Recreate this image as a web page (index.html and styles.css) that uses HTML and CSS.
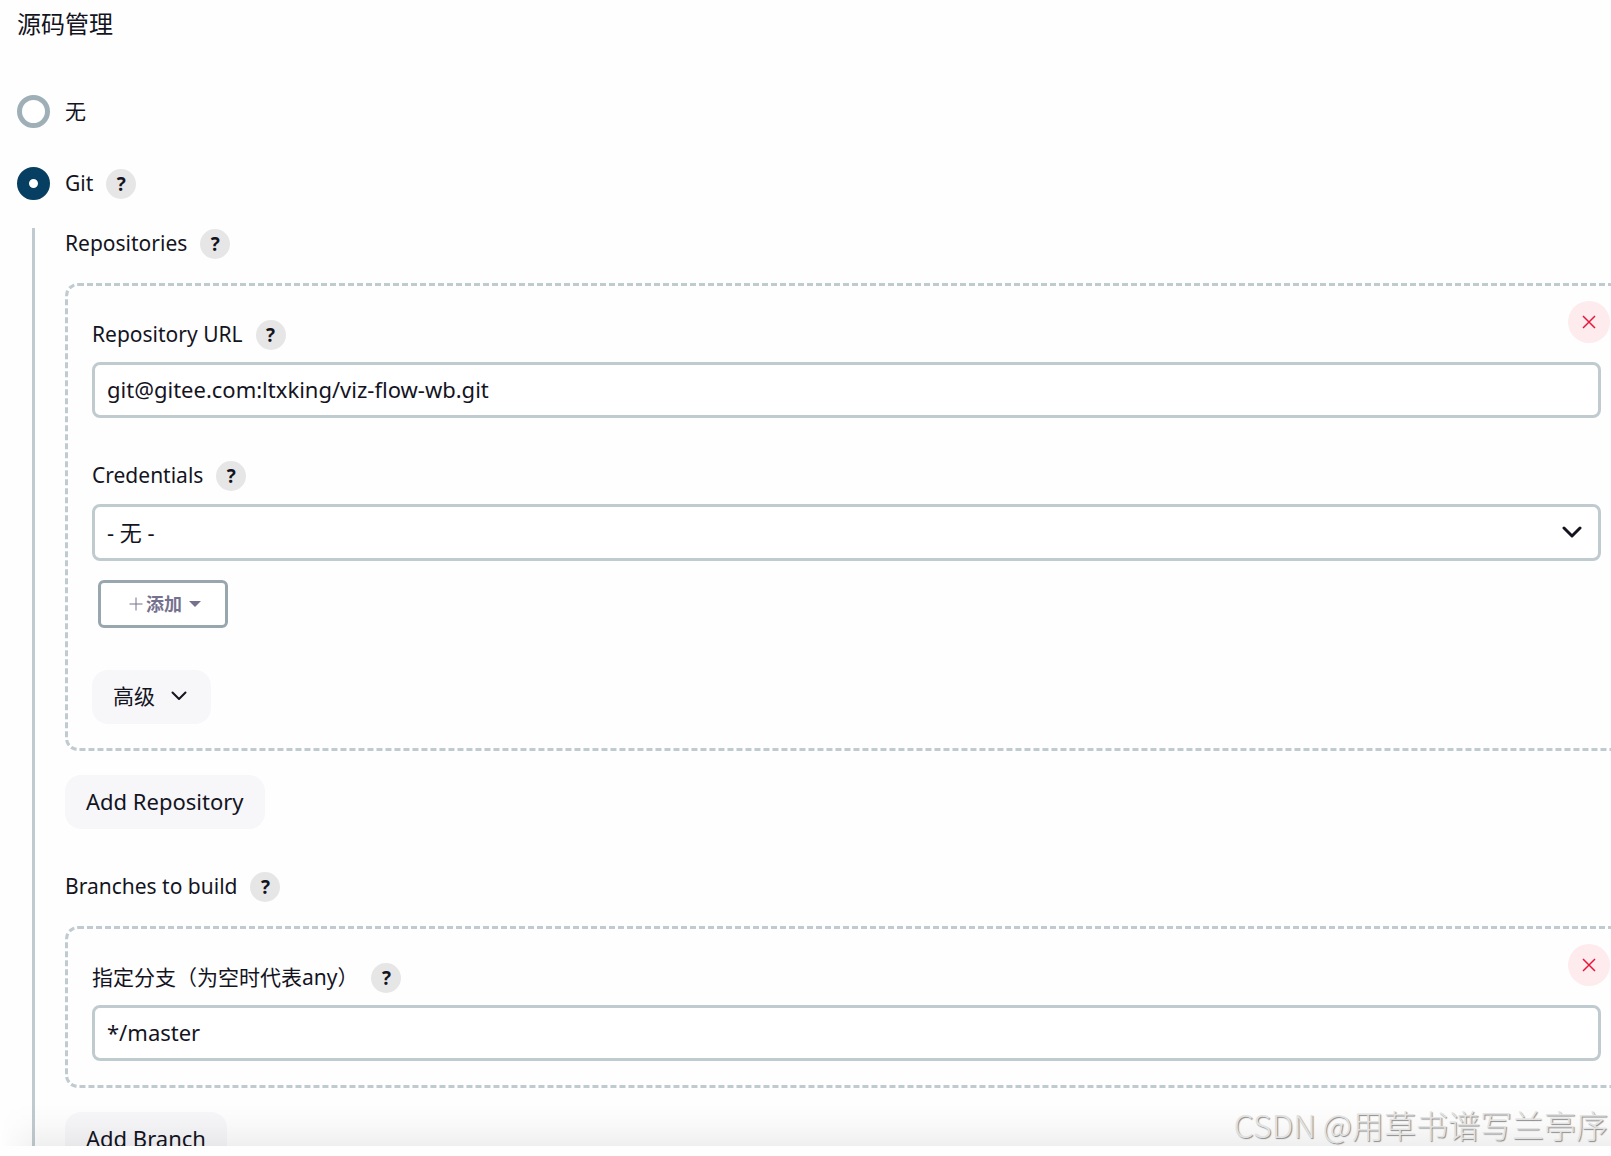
FILE: index.html
```html
<!DOCTYPE html>
<html lang="zh-CN">
<head>
    <meta charset="utf-8">
    <title>源码管理</title>
    <meta name="viewport" content="width=device-width,initial-scale=1">
    <link rel="stylesheet" href="styles.css">
</head>
<body>
    <form class="config">
        <h2 class="title">源码管理</h2>

        <div class="radio-row">
            <input type="radio" name="scm" id="scm-none">
            <label for="scm-none">无</label>
        </div>
        <div class="radio-row">
            <input type="radio" name="scm" id="scm-git" checked>
            <label for="scm-git">Git</label>
            <button type="button" class="help">?</button>
        </div>

        <div class="nested">
            <div class="label-row">
                <span>Repositories</span>
                <button type="button" class="help">?</button>
            </div>
            <div class="chunk">
                <button type="button" class="delete" aria-label="删除">
                    <svg width="14" height="14" viewBox="0 0 14 14"><path d="M1 1l12 12M13 1l-12 12"/></svg>
                </button>
                <div class="label-row">
                    <label for="url">Repository URL</label>
                    <button type="button" class="help">?</button>
                </div>
                <input type="text" class="field" id="url" value="git@gitee.com:ltxking/viz-flow-wb.git" spellcheck="false">

                <div class="label-row next">
                    <label for="credentials">Credentials</label>
                    <button type="button" class="help">?</button>
                </div>
                <div class="select">
                    <select class="field" id="credentials">
                        <option>- 无 -</option>
                    </select>
                    <svg class="arrow" width="20" height="12" viewBox="0 0 20 12"><path d="M2 2l8 8 8-8"/></svg>
                </div>
                <button type="button" class="add">
                    <svg class="plus" width="14" height="14" viewBox="0 0 14 14"><path d="M7 0.5v13M0.5 7h13"/></svg>
                    添加
                    <svg class="caret" width="12" height="6" viewBox="0 0 12 6"><path d="M0 0h12L6 6z"/></svg>
                </button>
                <button type="button" class="btn advanced">
                    高级
                    <svg width="16" height="10" viewBox="0 0 16 10"><path d="M1.5 1.5L8 8l6.500-6.500"/></svg>
                </button>
            </div>
            <button type="button" class="btn">Add Repository</button>

            <div class="label-row next">
                <span>Branches to build</span>
                <button type="button" class="help">?</button>
            </div>
            <div class="chunk">
                <button type="button" class="delete" aria-label="删除">
                    <svg width="14" height="14" viewBox="0 0 14 14"><path d="M1 1l12 12M13 1l-12 12"/></svg>
                </button>
                <div class="label-row">
                    <label for="branch">指定分支（为空时代表any）</label>
                    <button type="button" class="help">?</button>
                </div>
                <input type="text" class="field" id="branch" value="*/master">
            </div>
            <button type="button" class="btn">Add Branch</button>
        </div>
    </form>
    <div class="bottom-bar"></div>
    <div class="watermark">CSDN @用草书谱写兰亭序</div>
</body>
</html>
```
FILE: styles.css
```css
*{
    box-sizing: border-box;
}
body{
    margin:0;
    height:100vh;
    overflow: hidden;
    display:flex;
    flex-direction: column;
    background-color: #fefefe;
    color:#14141f;
    font-family: "Noto Sans", "Noto Sans CJK SC", sans-serif;
    font-size: 21px;
    line-height: 30px;
}
button, input, select{
    font: inherit;
    color:inherit;
    margin:0;
}
button{
    border:none;
    padding:0;
    cursor: pointer;
}
svg{
    display:block;
    fill:none;
    stroke:currentColor;
}
.config{
    flex:1;
    min-height: 0;
    overflow: hidden;
    padding:8px 0 0 17px;
}
.title{
    margin:0 0 55px;
    font-size: 24px;
    font-weight: 400;
    line-height: 32px;
}

/* radios */
.radio-row{
    display:flex;
    align-items: center;
    height:33px;
    margin-bottom: 39px;
}
.radio-row input{
    appearance: none;
    width:33px;
    height:33px;
    margin-right: 15px;
    border:5px solid #9eafb7;
    border-radius: 50%;
    background-color: #fff;
}
.radio-row input:checked{
    border:12px solid #063f61;
}
.radio-row label, .label-row label, .label-row span{
    padding-bottom: 2px;
}
.help{
    width:30px;
    height:30px;
    margin-left: 13px;
    border-radius: 50%;
    background-color: #e6e6e6;
    font-family: "Open Sans", sans-serif;
    font-size: 19px;
    font-weight: 700;
    line-height: 30px;
}

/* settings under the selected radio */
.nested{
    margin:-11px 0 0 15px;
    padding:1px 0 60px 30px;
    border-left: 3px solid #c0cbd0;
}
.label-row{
    display:flex;
    align-items: center;
    height:30px;
}
.label-row.next{
    margin-top: 43px;
}
.chunk{
    position: relative;
    margin:24px -17px 24px 0;
    padding:34px 24px 24px;
    border:3px dashed #c0cbd0;
    border-radius: 13px;
}
.delete{
    position: absolute;
    top:15px;
    right:15px;
    display:flex;
    align-items: center;
    justify-content: center;
    width:42px;
    height:42px;
    border-radius: 50%;
    background-color: #fdebed;
    color:#e6173b;
}
.delete svg{
    stroke-width: 1.5;
}
.field{
    display:block;
    width:100%;
    height:56px;
    margin-top: 12px;
    padding:0 12px 2px;
    border:3px solid #c0cbd0;
    border-radius: 8px;
    background-color: #fff;
    font-size: 22px;
}
.select{
    position: relative;
}
.select .field{
    height:57px;
    margin-top: 13px;
    appearance: none;
}
.arrow{
    position: absolute;
    right:19px;
    top:22px;
    stroke-width: 3;
    stroke-linecap: round;
    stroke-linejoin: round;
    pointer-events: none;
}
.add{
    display:flex;
    align-items: center;
    gap:4px;
    height:48px;
    margin:19px 0 42px 6px;
    padding:0 24px 0 28px;
    border:3px solid #98a7ae;
    border-radius: 6px;
    background-color: #fff;
    color:#75718f;
    font-size: 18px;
    font-weight: 700;
}
.plus{
    margin-right: -1px;
}
.caret{
    margin-left: 3px;
    fill:currentColor;
    stroke:none;
}
.btn{
    display:flex;
    align-items: center;
    height:54px;
    padding:0 21px 2px;
    border-radius: 16px;
    background-color: #f7f7fa;
    font-size: 22px;
}
.advanced{
    padding-right: 24px;
    font-size: 21px;
}
.advanced svg{
    margin-left: 16px;
    stroke-width: 2;
    stroke-linecap: round;
    stroke-linejoin: round;
}

.bottom-bar{
    position: relative;
    flex:none;
    height:10px;
    background-color: #fefefe;
}
/* shade above the bar, fading out towards the left edge */
.bottom-bar::before{
    content:"";
    position: absolute;
    left:0;
    right:0;
    bottom:100%;
    height:42px;
    background: linear-gradient(rgba(0,0,0,0), rgba(0,0,0,0.02) 50%, rgba(0,0,0,0.06));
    -webkit-mask-image: linear-gradient(to right, transparent, #000 42px);
    mask-image: linear-gradient(to right, transparent, #000 42px);
    pointer-events: none;
}
.watermark{
    position: absolute;
    right:3px;
    bottom:12px;
    color:#e2e2e2;
    font-family: "Noto Sans CJK SC", sans-serif;
    font-size: 32px;
    font-weight: 300;
    line-height: 40px;
    text-shadow: 1px 1px 1px #888;
}
```
